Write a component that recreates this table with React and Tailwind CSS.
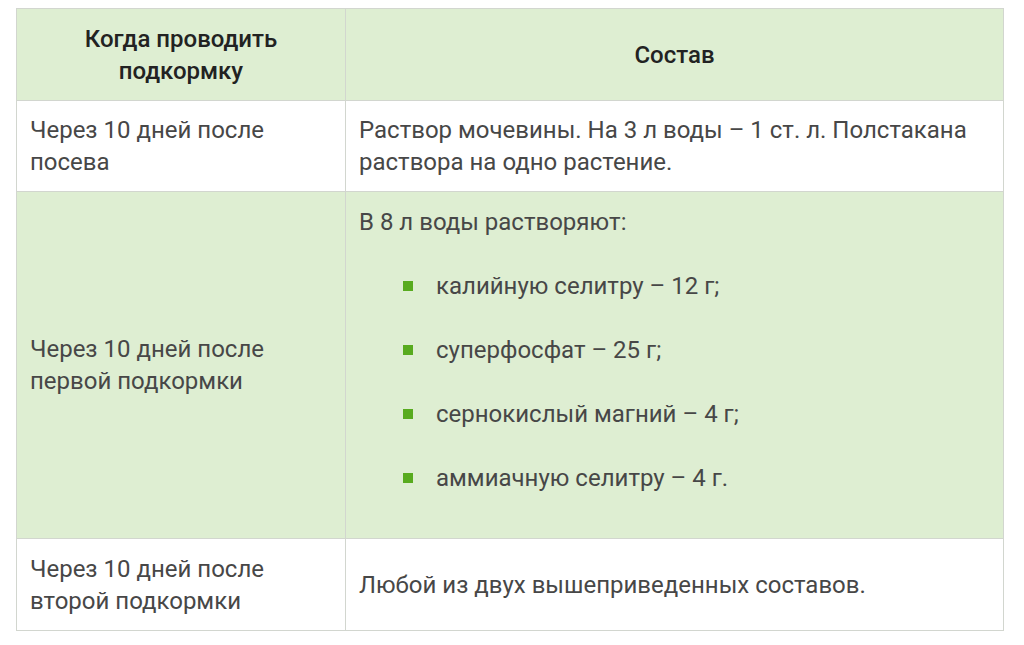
const items = [
  'калийную селитру – 12 г;',
  'суперфосфат – 25 г;',
  'сернокислый магний – 4 г;',
  'аммиачную селитру – 4 г.',
];

export default function App() {
  return (
    <div className="w-[1024px] h-[645px] bg-white pt-[8px] pl-[16px] font-['Roboto',sans-serif] text-[24px] leading-[32px]">
      <table className="w-[988px] border-collapse table-fixed">
        <colgroup>
          <col className="w-[329px]" />
          <col />
        </colgroup>
        <thead>
          <tr className="bg-[#deeed2] h-[92px]">
            <th className="border border-[#d2d6cf] font-medium text-[#222] text-center px-[14px]">
              Когда проводить<br />подкормку
            </th>
            <th className="border border-[#d2d6cf] font-medium text-[#222] text-center px-[14px]">
              Состав
            </th>
          </tr>
        </thead>
        <tbody className="text-[#474747]">
          <tr className="h-[91px]">
            <td className="border border-[#d2d6cf] px-[13px] py-[13px] align-middle">
              Через 10 дней после<br />посева
            </td>
            <td className="border border-[#d2d6cf] px-[13px] py-[13px] align-middle">
              Раствор мочевины. На 3 л воды – 1 ст. л. Полстакана раствора на одно растение.
            </td>
          </tr>
          <tr className="bg-[#deeed2]">
            <td className="border border-[#d2d6cf] px-[13px] align-middle">
              Через 10 дней после<br />первой подкормки
            </td>
            <td className="border border-[#d2d6cf] px-[13px] pt-[14px] pb-[12px] align-top">
              <p>В 8 л воды растворяют:</p>
              <ul className="mt-[32px] mb-[32px] pl-[44px] flex flex-col gap-[32px]">
                {items.map(t => (
                  <li key={t} className="flex items-center">
                    <span className="w-[10px] h-[10px] bg-[#58ab1f] shrink-0 mr-[23px]" />
                    {t}
                  </li>
                ))}
              </ul>
            </td>
          </tr>
          <tr className="h-[92px]">
            <td className="border border-[#d2d6cf] px-[13px] align-middle">
              Через 10 дней после<br />второй подкормки
            </td>
            <td className="border border-[#d2d6cf] px-[13px] align-middle">
              Любой из двух вышеприведенных составов.
            </td>
          </tr>
        </tbody>
      </table>
    </div>
  );
}
